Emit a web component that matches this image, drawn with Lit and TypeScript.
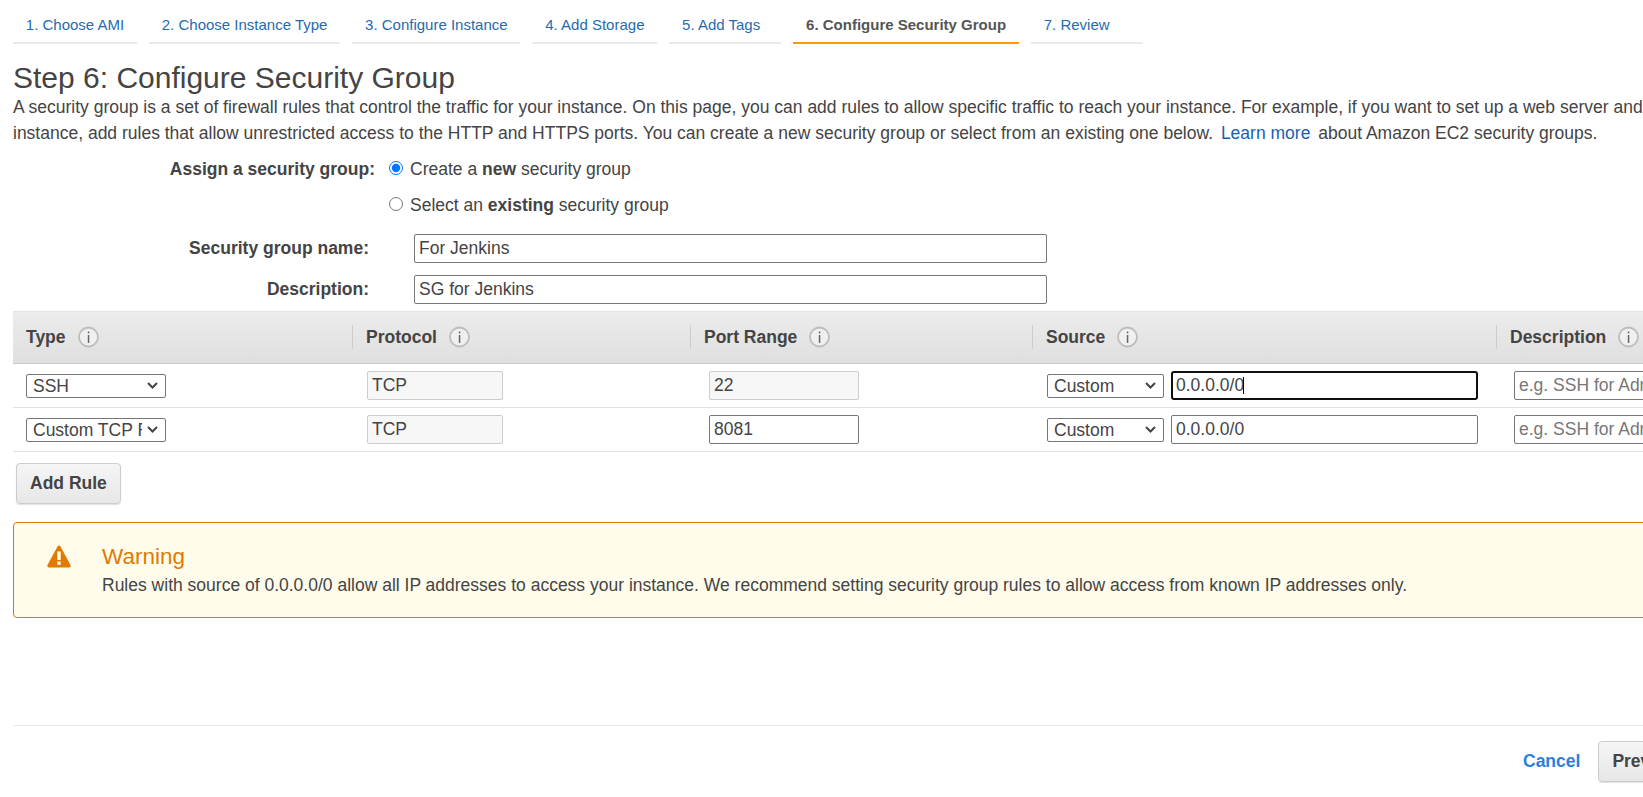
import { LitElement, html, css } from 'lit';
import { customElement } from 'lit/decorators.js';

const TABS = [
  '1. Choose AMI',
  '2. Choose Instance Type',
  '3. Configure Instance',
  '4. Add Storage',
  '5. Add Tags',
  '6. Configure Security Group',
  '7. Review',
];

const COLUMNS = ['Type', 'Protocol', 'Port Range', 'Source', 'Description'];

const RULES = [
  { type: 'SSH', port: '22', portLocked: true, focused: true },
  { type: 'Custom TCP Rule', port: '8081', portLocked: false, focused: false },
];

const infoIcon = html`<svg class="info" width="21" height="22" viewBox="0 0 21 22">
  <circle cx="10.500" cy="11" r="9.500" fill="#f0f0f0" stroke="#bdbdbd" stroke-width="1.800"></circle>
  <rect x="9.800" y="5.500" width="1.500" height="1.800" fill="#666"></rect>
  <rect x="9.800" y="9" width="1.500" height="8" fill="#666"></rect>
</svg>`;

@customElement('app-root')
export class AppRoot extends LitElement {
  static styles = css`
    :host {
      display: block;
      width: 1643px;
      height: 797px;
      overflow: hidden;
      background: #fff;
      color: #444;
      font-family: 'Liberation Sans', Arial, sans-serif;
      font-size: 17.5px;
    }
    .page {
      width: 1900px;
      box-sizing: border-box;
      padding: 0 0 0 13px;
    }
    .tabs {
      display: flex;
      gap: 12px;
      height: 44px;
    }
    .tab {
      box-sizing: border-box;
      height: 44px;
      min-width: 112px;
      padding: 17px 12.8px 0;
      font-size: 15px;
      line-height: 16px;
      color: #1f6cb0;
      border-bottom: 2px solid #eaeaea;
    }
    .tab.active {
      color: #555;
      font-weight: bold;
      border-bottom-color: #ff9900;
    }
    h1 {
      margin: 18px 0 0;
      font-size: 30px;
      font-weight: normal;
      line-height: 32px;
    }
    .intro {
      margin: 0;
      height: 52px;
      line-height: 26px;
      white-space: nowrap;
    }
    .intro a {
      color: #1a5fb4;
      text-decoration: none;
      margin: 0 3px;
    }
    .choice {
      display: grid;
      grid-template-columns: 362px auto;
      column-gap: 14px;
      margin-top: 5px;
    }
    .choice label.head {
      font-weight: bold;
      text-align: right;
      line-height: 36px;
    }
    .radios {
      display: flex;
      flex-direction: column;
    }
    .radio {
      display: flex;
      align-items: center;
      height: 36px;
      gap: 7px;
    }
    .radio input {
      width: 14px;
      height: 14px;
      margin: -3px 0 0 0;
    }
    .field {
      display: grid;
      grid-template-columns: 356px 633px;
      column-gap: 45px;
      align-items: center;
      height: 29px;
    }
    .field label {
      font-weight: bold;
      text-align: right;
    }
    .fields {
      display: flex;
      flex-direction: column;
      gap: 12px;
      margin-top: 11px;
    }
    input.text {
      box-sizing: border-box;
      height: 29px;
      width: 100%;
      padding: 0 4px;
      border: 1px solid #767676;
      border-radius: 2px;
      background: #fff;
      color: #444;
      font: 17.5px 'Liberation Sans', Arial, sans-serif;
      outline: none;
    }
    input.text::placeholder {
      color: #777;
    }
    input.text.locked {
      background: #f7f7f7;
      border-color: #ccc;
    }
    .table {
      margin-top: 7px;
    }
    .row {
      display: grid;
      grid-template-columns: 339px 338px 342px 464px 1fr;
    }
    .row.head {
      height: 53px;
      box-sizing: border-box;
      border-top: 1px solid #e4e4e4;
      border-bottom: 1px solid #c9c9c9;
      background: linear-gradient(#ececec, #dfdfdf);
    }
    .th {
      display: flex;
      align-items: center;
      gap: 12px;
      padding-left: 13px;
      padding-bottom: 1px;
      font-weight: bold;
      position: relative;
    }
    .th.sep {
      padding-left: 14px;
    }
    .th.sep::before {
      content: '';
      position: absolute;
      left: 0;
      top: 13px;
      height: 24px;
      width: 1px;
      background: #ccc;
    }
    .row.body {
      height: 44px;
      box-sizing: border-box;
      border-bottom: 1px solid #e1e1e1;
    }
    .td {
      display: flex;
      align-items: center;
      gap: 7px;
      height: 43px;
    }
    select {
      appearance: none;
      box-sizing: border-box;
      height: 24px;
      border: 1px solid #767676;
      border-radius: 2px;
      background: #fff url("data:image/svg+xml,%3Csvg xmlns='http://www.w3.org/2000/svg' width='11' height='7'%3E%3Cpath d='M1 1l4.500 4.500L10 1' fill='none' stroke='%23444' stroke-width='2'/%3E%3C/svg%3E") no-repeat right 7px center;
      color: #444;
      font: 17.5px 'Liberation Sans', Arial, sans-serif;
      padding: 0 23px 0 6px;
      outline: none;
    }
    select.type {
      margin-left: 13px;
      width: 140px;
    }
    input.text.proto {
      margin-left: 15px;
      width: 136px;
    }
    input.text.port {
      margin-left: 19px;
      width: 150px;
    }
    select.source {
      margin-left: 15px;
      width: 117px;
      flex: none;
    }
    .cidr-wrap {
      position: relative;
      width: 307px;
      display: flex;
    }
    input.text.focused {
      border: 2px solid #101010;
      border-radius: 3px;
      padding: 0 3px;
    }
    .caret {
      position: absolute;
      left: 72px;
      top: 6px;
      width: 1px;
      height: 17px;
      background: #000;
    }
    input.text.note {
      margin-left: 18px;
      width: 200px;
    }
    .add {
      display: flex;
      margin: 11px 0 0 3px;
    }
    button {
      box-sizing: border-box;
      height: 41px;
      border: 1px solid #ccc;
      border-radius: 4px;
      background: linear-gradient(#f5f5f5, #e7e7e7);
      box-shadow: 0 1px 1px rgba(0, 0, 0, 0.12);
      color: #444;
      font: bold 17.5px 'Liberation Sans', Arial, sans-serif;
      padding: 0 13px;
    }
    .warning {
      box-sizing: border-box;
      display: flex;
      height: 96px;
      margin-top: 18px;
      border: 1px solid #e07a00;
      border-radius: 4px;
      background: #fffcec;
      padding: 22px 0 0 33px;
      gap: 31px;
    }
    .warning svg {
      flex: none;
    }
    .warning h2 {
      margin: 0;
      font-size: 22.5px;
      font-weight: normal;
      line-height: 24px;
      color: #e07a00;
    }
    .warning p {
      margin: 5px 0 0;
      font-size: 17.5px;
      line-height: 22px;
      color: #444;
    }
    .footer {
      display: flex;
      align-items: center;
      margin-top: 107px;
      height: 70px;
      border-top: 1px solid #eaeaea;
      padding-left: 1510px;
      gap: 18px;
    }
    .cancel {
      color: #2a7fe0;
      font-weight: bold;
      text-decoration: none;
    }
    .footer button {
      width: 100px;
      text-align: left;
    }
  `;

  render() {
    return html`
      <div class="page">
        <nav class="tabs">
          ${TABS.map(
            (t, i) => html`<div class="tab ${i === 5 ? 'active' : ''}">${t}</div>`
          )}
        </nav>
        <h1>Step 6: Configure Security Group</h1>
        <p class="intro">
          A security group is a set of firewall rules that control the traffic for your instance. On this page, you can add rules to allow specific traffic to reach your instance. For example, if you want to set up a web server and<br />instance, add rules that allow unrestricted access to the HTTP and HTTPS ports. You can create a new security group or select from an existing one below. <a href="#">Learn more</a> about Amazon EC2 security groups.
        </p>
        <div class="choice">
          <label class="head">Assign a security group:</label>
          <div class="radios">
            <div class="radio">
              <input type="radio" name="sg" checked />
              <span>Create a <b>new</b> security group</span>
            </div>
            <div class="radio">
              <input type="radio" name="sg" />
              <span>Select an <b>existing</b> security group</span>
            </div>
          </div>
        </div>
        <div class="fields">
          <div class="field">
            <label>Security group name:</label>
            <input class="text" .value=${'For Jenkins'} />
          </div>
          <div class="field">
            <label>Description:</label>
            <input class="text" .value=${'SG for Jenkins'} />
          </div>
        </div>
        <div class="table">
          <div class="row head">
            ${COLUMNS.map(
              (c, i) => html`<div class="th ${i > 0 ? 'sep' : ''}">${c} ${infoIcon}</div>`
            )}
          </div>
          ${RULES.map(
            (r) => html`<div class="row body">
              <div class="td">
                <select class="type"><option>${r.type}</option></select>
              </div>
              <div class="td">
                <input class="text locked proto" .value=${'TCP'} readonly />
              </div>
              <div class="td">
                <input class="text port ${r.portLocked ? 'locked' : ''}" .value=${r.port} />
              </div>
              <div class="td">
                <select class="source"><option>Custom</option></select>
                <div class="cidr-wrap">
                  <input class="text ${r.focused ? 'focused' : ''}" .value=${'0.0.0.0/0'} />
                  ${r.focused ? html`<span class="caret"></span>` : ''}
                </div>
              </div>
              <div class="td">
                <input class="text note" placeholder="e.g. SSH for Admin Desktop" />
              </div>
            </div>`
          )}
        </div>
        <div class="add"><button>Add Rule</button></div>
        <section class="warning">
          <svg width="24" height="23" viewBox="0 0 24 23">
            <path d="M12 0.500c.7 0 1.200.4 1.500 1l10 18.500c.6 1.100-.1 2.500-1.400 2.500H1.900C.6 22.500-.1 21.100.5 20l10-18.500c.3-.6.8-1 1.500-1z" fill="#e07a00"></path>
            <rect x="10.300" y="6.500" width="3.400" height="8.500" fill="#fffcec"></rect>
            <rect x="10.300" y="16.500" width="3.400" height="3.400" fill="#fffcec"></rect>
          </svg>
          <div>
            <h2>Warning</h2>
            <p>Rules with source of 0.0.0.0/0 allow all IP addresses to access your instance. We recommend setting security group rules to allow access from known IP addresses only.</p>
          </div>
        </section>
        <div class="footer">
          <a class="cancel" href="#">Cancel</a>
          <button>Previous</button>
        </div>
      </div>
    `;
  }
}
